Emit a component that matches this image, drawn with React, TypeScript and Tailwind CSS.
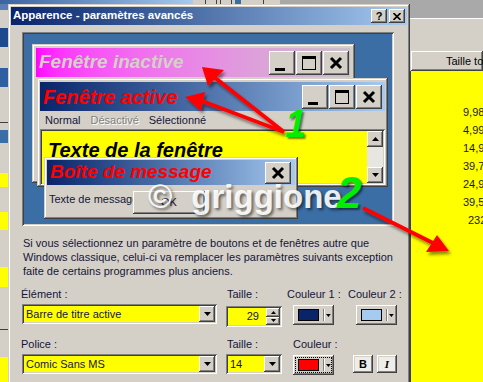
import React from "react";

// Win2000 bevels
const raised =
  "shadow-[inset_-1px_-1px_#404040,inset_1px_1px_#ffffff,inset_-2px_-2px_#808080,inset_2px_2px_#d4d0c8]";
const frame =
  "shadow-[inset_-1px_-1px_#404040,inset_1px_1px_#d4d0c8,inset_-2px_-2px_#808080,inset_2px_2px_#ffffff]";
const sunken =
  "shadow-[inset_1px_1px_#808080,inset_-1px_-1px_#ffffff,inset_2px_2px_#404040,inset_-2px_-2px_#d4d0c8]";
const comic = "font-['Liberation_Sans',Arial,sans-serif] font-bold italic";

function CapBtn({ kind }: { kind: "min" | "max" | "close" }) {
  return (
    <div className={`w-[26px] h-[24px] bg-[#d4d0c8] ${raised}`}>
      <svg width="26" height="24" viewBox="0 0 26 24">
        {kind === "min" && <rect x="6" y="17" width="10" height="3" fill="#000" />}
        {kind === "max" && (
          <>
            <rect x="6.5" y="5.5" width="13" height="13" fill="none" stroke="#000" />
            <rect x="6" y="5" width="14" height="3" fill="#000" />
          </>
        )}
        {kind === "close" && (
          <path d="M8 7 L18 17 M18 7 L8 17" stroke="#000" strokeWidth="3" />
        )}
      </svg>
    </div>
  );
}

function DropBtn() {
  return (
    <div className={`w-[16px] h-[16px] bg-[#d4d0c8] ${raised} flex items-center justify-center`}>
      <svg width="7" height="4" viewBox="0 0 7 4">
        <path d="M0 0 H7 L3.5 4 Z" fill="#000" />
      </svg>
    </div>
  );
}

function Combo({ width, text }: { width: string; text: string }) {
  return (
    <div className={`${width} h-[20px] p-[2px] ${sunken}`}>
      <div className="h-full bg-[#ffff00] flex items-center">
        <span className="flex-1 pl-[2px] whitespace-nowrap">{text}</span>
        <DropBtn />
      </div>
    </div>
  );
}

function ColorBtn({ swatch, focus }: { swatch: string; focus?: boolean }) {
  return (
    <div className={`w-[41px] h-[20px] bg-[#d4d0c8] ${raised} p-[3px]`}>
      <div
        className={`h-full flex items-center pl-[2px] ${
          focus ? "outline-1 outline-dotted outline-black" : ""
        }`}
      >
        <div className={`w-[22px] h-[12px] border border-black ${swatch}`} />
        <div className="w-[1px] h-[12px] bg-[#808080] ml-[4px]" />
        <div className="w-[1px] h-[12px] bg-white" />
        <svg width="5" height="3" viewBox="0 0 5 3" className="ml-[1px]">
          <path d="M0 0 H5 L2.5 3 Z" fill="#000" />
        </svg>
      </div>
    </div>
  );
}

function Field({
  label,
  className,
  children,
}: {
  label: string;
  className?: string;
  children: React.ReactNode;
}) {
  return (
    <div className={`flex flex-col ${className ?? ""}`}>
      <span className="h-[14px] leading-[14px] whitespace-nowrap">{label}</span>
      <div className="mt-[3px]">{children}</div>
    </div>
  );
}

function Preview() {
  return (
    <div className={`ml-[11px] mt-[7px] w-[372px] h-[194px] p-[2px] ${sunken}`}>
      <div className="relative w-full h-full bg-[#3a6ea5]">
        {/* inactive window */}
        <div className={`absolute left-[8px] top-[10px] w-[323px] h-[139px] bg-[#d4d0c8] p-[4px] ${frame}`}>
          <div className="h-[29px] w-[314px] flex items-center bg-linear-to-r from-[#ff00ff] to-[#c8c0c8] pl-[3px] pr-[1px]">
            <span className={`${comic} flex-1 text-[19px] text-[#d4d0c8]`}>Fenêtre inactive</span>
            <div className="flex gap-[1px]">
              <CapBtn kind="min" />
              <CapBtn kind="max" />
              <CapBtn kind="close" />
            </div>
          </div>
        </div>

        {/* active window */}
        <div className={`absolute left-[13px] top-[44px] w-[351px] h-[109px] bg-[#d4d0c8] px-[3px] pt-[4px] ${frame}`}>
          <div className="h-[29px] flex items-center bg-linear-to-r from-[#0a246a] to-[#a6caf0] pl-[3px] pr-[3px]">
            <span className={`${comic} flex-1 text-[20px] text-[#ff0000]`}>Fenêtre active</span>
            <div className="flex gap-[1px]">
              <CapBtn kind="min" />
              <CapBtn kind="max" />
              <CapBtn kind="close" />
            </div>
          </div>
          <div className="h-[18px] flex items-center gap-[10px] pl-[5px]">
            <span>Normal</span>
            <span className="text-[#808080] [text-shadow:1px_1px_0_#ffffff]">Désactivé</span>
            <span>Sélectionné</span>
          </div>
          <div className={`h-[56px] p-[2px] ${sunken}`}>
            <div className="h-full flex">
              <div className="flex-1 bg-[#ffff00] pl-[6px] pt-[4px]">
                <span className={`${comic} text-[20px] text-black`}>Texte de la fenêtre</span>
              </div>
              <div className="w-[16px] flex flex-col bg-[#e8e6e0]">
                <div className={`h-[16px] bg-[#d4d0c8] ${raised} flex items-center justify-center`}>
                  <svg width="7" height="4" viewBox="0 0 7 4">
                    <path d="M0 4 H7 L3.5 0 Z" fill="#000" />
                  </svg>
                </div>
                <div className="flex-1" />
                <div className={`h-[16px] bg-[#d4d0c8] ${raised} flex items-center justify-center`}>
                  <svg width="7" height="4" viewBox="0 0 7 4">
                    <path d="M0 0 H7 L3.5 4 Z" fill="#000" />
                  </svg>
                </div>
              </div>
            </div>
          </div>
        </div>

        {/* message box */}
        <div className={`absolute left-[20px] top-[123px] w-[254px] h-[62px] bg-[#d4d0c8] p-[3px] ${frame}`}>
          <div className="h-[25px] flex items-center bg-linear-to-r from-[#0a246a] to-[#a6caf0] pl-[3px] pr-[4px]">
            <span className={`${comic} flex-1 text-[19px] text-[#ff0000]`}>Boîte de message</span>
            <div className={`w-[26px] h-[22px] bg-[#d4d0c8] ${raised}`}>
              <svg width="26" height="22" viewBox="0 0 26 22">
                <path d="M8 6 L18 16 M18 6 L8 16" stroke="#000" strokeWidth="3" />
              </svg>
            </div>
          </div>
          <div className="flex items-start">
            <span className="w-[86px] pl-[2px] mt-[7px] leading-[14px] whitespace-nowrap">Texte de message</span>
            <div className={`w-[72px] h-[23px] mt-[6px] bg-[#d4d0c8] ${raised} flex items-center justify-center`}>
              OK
            </div>
          </div>
        </div>
      </div>
    </div>
  );
}

function Dialog() {
  return (
    <div className={`absolute left-[8px] top-[4px] w-[402px] h-[400px] bg-[#d4d0c8] p-[3px] ${frame} text-[#15153a]`}>
      <div className="h-[18px] flex items-center bg-linear-to-r from-[#0a246a] to-[#a6caf0] pl-[2px] pr-[2px]">
        <span className="flex-1 text-white font-bold text-[11.5px]">Apparence - paramètres avancés</span>
        <div className="flex gap-[2px]">
          <div className={`w-[16px] h-[14px] bg-[#d4d0c8] ${raised} flex items-center justify-center font-bold text-black text-[11px] leading-none`}>
            ?
          </div>
          <div className={`w-[16px] h-[14px] bg-[#d4d0c8] ${raised} flex items-center justify-center`}>
            <svg width="8" height="7" viewBox="0 0 8 7">
              <path d="M0.5 0 L7.5 7 M7.5 0 L0.5 7" stroke="#000" strokeWidth="1.6" />
            </svg>
          </div>
        </div>
      </div>

      <Preview />

      <p className="ml-[12px] mt-[10px] leading-[14px] whitespace-nowrap">
        Si vous sélectionnez un paramètre de boutons et de fenêtres autre que
        <br />
        Windows classique, celui-ci va remplacer les paramètres suivants exception
        <br />
        faite de certains programmes plus anciens.
      </p>

      <div className="flex ml-[10px] mt-[9px]">
        <Field label="Élément :" className="w-[196px]">
          <div className="ml-[1px]">
            <Combo width="w-[195px]" text="Barre de titre active" />
          </div>
        </Field>
        <Field label="Taille :" className="ml-[9px] w-[56px] pl-[1px]">
          <div className={`-ml-[1px] mt-[2px] w-[56px] h-[21px] p-[2px] ${sunken}`}>
            <div className="h-full flex">
              <div className="flex-1 bg-[#ffff00] text-right pr-[7px] leading-[17px]">29</div>
              <div className="w-[14px] flex flex-col">
                <div className={`flex-1 bg-[#d4d0c8] ${raised} flex items-center justify-center`}>
                  <svg width="5" height="3" viewBox="0 0 5 3">
                    <path d="M0 3 H5 L2.5 0 Z" fill="#000" />
                  </svg>
                </div>
                <div className={`flex-1 bg-[#d4d0c8] ${raised} flex items-center justify-center`}>
                  <svg width="5" height="3" viewBox="0 0 5 3">
                    <path d="M0 0 H5 L2.5 3 Z" fill="#000" />
                  </svg>
                </div>
              </div>
            </div>
          </div>
        </Field>
        <Field label="Couleur 1 :" className="ml-[5px] w-[61px]">
          <div className="ml-[6px] mt-[1px]">
            <ColorBtn swatch="bg-[#0a246a]" />
          </div>
        </Field>
        <Field label="Couleur 2 :" className="">
          <div className="ml-[8px] mt-[1px]">
            <ColorBtn swatch="bg-[#a6caf0]" />
          </div>
        </Field>
      </div>

      <div className="flex ml-[10px] mt-[10px]">
        <Field label="Police :" className="w-[196px]">
          <div className="ml-[1px]">
            <Combo width="w-[195px]" text="Comic Sans MS" />
          </div>
        </Field>
        <Field label="Taille :" className="ml-[9px] w-[56px] pl-[1px]">
          <div className="-ml-[1px]">
            <Combo width="w-[56px]" text="14" />
          </div>
        </Field>
        <Field label="Couleur :" className="ml-[11px] w-[41px]">
          <div className="mt-[1px]">
            <ColorBtn swatch="bg-[#ff0000]" focus />
          </div>
        </Field>
        <div className="ml-[19px] mt-[18px] flex gap-[4px]">
          <div className={`w-[20px] h-[18px] bg-[#eeede9] ${raised} flex items-center justify-center font-bold text-black`}>
            B
          </div>
          <div className={`w-[20px] h-[18px] bg-[#eeede9] ${raised} flex items-center justify-center italic font-bold text-black font-['Liberation_Serif',serif]`}>
            I
          </div>
        </div>
      </div>
    </div>
  );
}

const leftBlocks = [
  { h: "h-[10px]", c: "bg-[#5b7fb5]" },
  { h: "h-[18px]", c: "bg-[#d4d0c8]" },
  { h: "h-[19px]", c: "bg-[#1c4a8c]" },
  { h: "h-[21px]", c: "bg-[#d4d0c8]" },
  { h: "h-[19px]", c: "bg-[#2f5fa0]" },
  { h: "h-[36px]", c: "bg-[#d4d0c8] border-b border-[#404040]" },
  { h: "h-[7px]", c: "bg-[#d4d0c8]" },
  { h: "h-[13px]", c: "bg-[#3a6ea5]" },
  { h: "h-[30px]", c: "bg-[#d4d0c8]" },
  { h: "h-[14px]", c: "bg-[#ffff00]" },
  { h: "h-[25px]", c: "bg-[#d4d0c8]" },
  { h: "h-[18px]", c: "bg-[#ffff00]" },
  { h: "h-[37px]", c: "bg-[#d4d0c8]" },
  { h: "h-[20px]", c: "bg-[#ffff00]" },
  { h: "h-[43px]", c: "bg-[#d4d0c8] border-b border-[#404040]" },
  { h: "h-[27px]", c: "bg-[#d4d0c8]" },
  { h: "flex-1", c: "bg-[#ffff00]" },
];

const sizes = [
  { t: "9,98 Mo", pl: "pl-[52px]" },
  { t: "4,99 Mo", pl: "pl-[52px]" },
  { t: "14,99 Mo", pl: "pl-[52px]" },
  { t: "39,72 Mo", pl: "pl-[52px]" },
  { t: "24,95 Mo", pl: "pl-[52px]" },
  { t: "39,58 Mo", pl: "pl-[52px]" },
  { t: "232 Mo", pl: "pl-[57px]" },
];

export default function App() {
  return (
    <div className="relative w-[483px] h-[382px] overflow-hidden bg-[#d4d0c8] font-['Liberation_Sans',Arial,sans-serif] text-[11px] text-black">
      {/* desktop behind, left edge */}
      <div className="absolute left-0 top-0 w-[8px] h-full flex flex-col">
        {leftBlocks.map((b, i) => (
          <div key={i} className={`${b.h} ${b.c}`} />
        ))}
      </div>

      {/* window title peeking above the dialog */}
      <div className="absolute left-0 top-0 w-[410px] h-[4px] flex">
        <div className="w-[193px] bg-linear-to-r from-[#3d63a0] to-[#a6caf0]" />
        <div className="w-[87px] bg-[#d4d0c8] flex gap-[3px] pl-[12px]">
          <div className="w-[12px] border-x border-[#404040]" />
          <div className="w-[12px] border-x border-[#404040]" />
          <div className="w-[6px] bg-[#3a6ea5]" />
          <div className="w-[20px] border-r border-[#404040]" />
        </div>
        <div className="flex-1 bg-[#a9a9a9]" />
      </div>

      {/* explorer window behind, right */}
      <div className="absolute left-[410px] top-0 right-0 bottom-0 flex flex-col">
        <div className="h-[18px] bg-[#a9a9a9]" />
        <div className="h-[1px] bg-white" />
        <div className="h-[32px] bg-[#d4d0c8]" />
        <div className={`h-[20px] ml-[1px] bg-[#d4d0c8] ${raised} pl-[35px] flex items-center whitespace-nowrap`}>
          Taille totale
        </div>
        <div className="flex-1 bg-[#ffff00] border-l border-[#404040] pt-[32px] text-[#1a1a1a]">
          {sizes.map((s) => (
            <div key={s.t} className={`h-[18px] leading-[18px] whitespace-nowrap ${s.pl}`}>
              {s.t}
            </div>
          ))}
        </div>
      </div>

      <Dialog />

      {/* watermark */}
      <div className="absolute left-[148px] top-[180px] flex items-baseline gap-[19px] font-bold text-[33px] leading-[33px] text-white/90 [text-shadow:2px_2px_3px_rgba(0,0,0,0.55)] whitespace-nowrap">
        <span>©</span>
        <span>griggione</span>
      </div>

      {/* arrows */}
      <svg className="absolute left-0 top-0 pointer-events-none" width="483" height="382" viewBox="0 0 483 382">
        <defs>
          <filter id="sh" x="-20%" y="-20%" width="140%" height="140%">
            <feDropShadow dx="2" dy="3" stdDeviation="1.5" floodColor="#000" floodOpacity="0.45" />
          </filter>
        </defs>
        <g filter="url(#sh)" fill="#ff0000" stroke="#ff0000">
          <line x1="284" y1="132" x2="214" y2="77" strokeWidth="4" />
          <polygon points="202,67 224,70 208,86" stroke="none" />
          <line x1="284" y1="132" x2="202" y2="101" strokeWidth="4" />
          <polygon points="185,97 205,92 201,111" stroke="none" />
          <line x1="363" y1="208" x2="433" y2="243" strokeWidth="4" />
          <polygon points="449,251 426,252 437,235" stroke="none" />
        </g>
      </svg>

      {/* numbers */}
      <div className="absolute left-[285px] top-[105px] font-bold italic text-[38px] leading-[38px] text-[#00ee00] [text-shadow:2px_2px_2px_rgba(0,0,0,0.5)]">
        1
      </div>
      <div className="absolute left-[337px] top-[171px] font-bold italic text-[44px] leading-[44px] text-[#00ee00] [text-shadow:2px_2px_2px_rgba(0,0,0,0.5)]">
        2
      </div>
    </div>
  );
}
